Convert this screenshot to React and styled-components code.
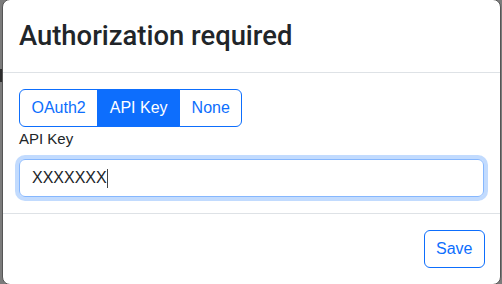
import React from "react";
import styled, { createGlobalStyle } from "styled-components";

const Global = createGlobalStyle`
  html, body { margin: 0; padding: 0; }
  body {
    width: 502px;
    height: 284px;
    overflow: hidden;
    background: #7b7b7b;
    font-family: "Liberation Sans", Arial, sans-serif;
    color: #212529;
  }
`;

const Backdrop = styled.div`
  position: relative;
  width: 502px;
  height: 284px;
  overflow: hidden;
  background: #7b7b7b;
`;

const PageMark = styled.div`
  position: absolute;
  left: 0;
  top: 69px;
  width: 2px;
  height: 13px;
  background: #2e2e2e;
`;

const Modal = styled.div`
  margin: -1px 0 0 2px;
  width: 499px;
  box-sizing: border-box;
  background: #fff;
  border: 1px solid #555;
  border-radius: 8px;
  display: flex;
  flex-direction: column;
`;

const Header = styled.div`
  padding: 16px;
  border-bottom: 1px solid #dee2e6;
`;

const Title = styled.h1`
  margin: 0;
  font-family: Roboto, "Liberation Sans", Arial, sans-serif;
  font-size: 27.4px;
  line-height: 40px;
  font-weight: 500;
  color: #212529;
`;

const Body = styled.div`
  padding: 16px;
  display: flex;
  flex-direction: column;
  align-items: flex-start;
`;

const Group = styled.div`
  display: inline-flex;
`;

const GroupButton = styled.button`
  font-family: "Liberation Sans", Arial, sans-serif;
  font-size: 16px;
  line-height: 24px;
  padding: 6px 11.5px;
  border: 1px solid #0d6efd;
  background: ${(p) => (p.$active ? "#0d6efd" : "#fff")};
  color: ${(p) => (p.$active ? "#fff" : "#0d6efd")};
  margin-left: -1px;
  border-radius: 0;
  cursor: pointer;
  &:first-child {
    margin-left: 0;
    border-radius: 6px 0 0 6px;
  }
  &:last-child {
    border-radius: 0 6px 6px 0;
  }
`;

const Label = styled.label`
  font-size: 15px;
  line-height: 24px;
  margin-bottom: 8px;
  color: #212529;
`;

const Field = styled.div`
  box-sizing: border-box;
  width: 100%;
  height: 38px;
  padding: 6px 12px;
  font-size: 16px;
  line-height: 24px;
  color: #212529;
  border: 1px solid #86b7fe;
  border-radius: 6px;
  box-shadow: 0 0 0 4px rgba(13, 110, 253, 0.25);
  display: flex;
  align-items: center;
`;

const Caret = styled.span`
  display: inline-block;
  width: 1px;
  height: 19px;
  background: #444;
`;

const Footer = styled.div`
  border-top: 1px solid #dee2e6;
  padding: 12px;
  display: flex;
  justify-content: flex-end;
`;

const SaveButton = styled.button`
  margin: 4px 3px 4px 4px;
  font-family: "Liberation Sans", Arial, sans-serif;
  font-size: 16px;
  line-height: 24px;
  padding: 6px 11.5px;
  border: 1px solid #0d6efd;
  border-radius: 6px;
  background: #fff;
  color: #0d6efd;
  cursor: pointer;
`;

export default function App() {
  return (
    <>
      <Global />
      <Backdrop>
        <PageMark />
        <Modal>
          <Header>
            <Title>Authorization required</Title>
          </Header>
          <Body>
            <Group>
              <GroupButton>OAuth2</GroupButton>
              <GroupButton $active>API Key</GroupButton>
              <GroupButton>None</GroupButton>
            </Group>
            <Label>API Key</Label>
            <Field role="textbox">
              XXXXXXX
              <Caret />
            </Field>
          </Body>
          <Footer>
            <SaveButton>Save</SaveButton>
          </Footer>
        </Modal>
      </Backdrop>
    </>
  );
}
